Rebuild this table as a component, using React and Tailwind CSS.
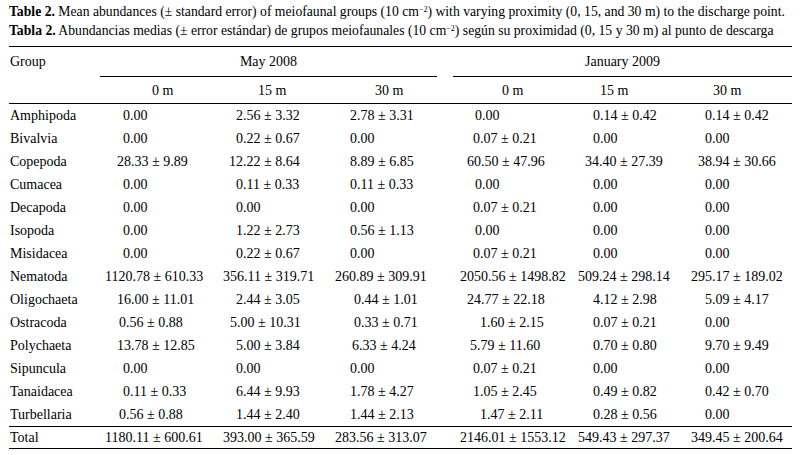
// Table 2 – meiofaunal abundances, typeset like the journal page
const COLS = ["w-[86px]", "w-[120px]", "w-[110px]", "w-[125px]", "w-[120px]", "w-[114px]", "w-[108px]"];

const rows = [
  ["Amphipoda", [["0.00", "pl-[28px]"], ["2.56 ± 3.32", "pl-[21px]"], ["2.78 ± 3.31", "pl-[25px]"], ["0.00", "pl-[25px]"], ["0.14 ± 0.42", "pl-[23px]"], ["0.14 ± 0.42", "pl-[21px]"]]],
  ["Bivalvia", [["0.00", "pl-[28px]"], ["0.22 ± 0.67", "pl-[21px]"], ["0.00", "pl-[25px]"], ["0.07 ± 0.21", "pl-[23px]"], ["0.00", "pl-[23px]"], ["0.00", "pl-[21px]"]]],
  ["Copepoda", [["28.33 ± 9.89", "pl-[22px]"], ["12.22 ± 8.64", "pl-[14px]"], ["8.89 ± 6.85", "pl-[25px]"], ["60.50 ± 47.96", "pl-[17px]"], ["34.40 ± 27.39", "pl-[15px]"], ["38.94 ± 30.66", "pl-[14px]"]]],
  ["Cumacea", [["0.00", "pl-[28px]"], ["0.11 ± 0.33", "pl-[21px]"], ["0.11 ± 0.33", "pl-[25px]"], ["0.00", "pl-[25px]"], ["0.00", "pl-[23px]"], ["0.00", "pl-[21px]"]]],
  ["Decapoda", [["0.00", "pl-[28px]"], ["0.00", "pl-[21px]"], ["0.00", "pl-[25px]"], ["0.07 ± 0.21", "pl-[23px]"], ["0.00", "pl-[23px]"], ["0.00", "pl-[21px]"]]],
  ["Isopoda", [["0.00", "pl-[28px]"], ["1.22 ± 2.73", "pl-[21px]"], ["0.56 ± 1.13", "pl-[25px]"], ["0.00", "pl-[25px]"], ["0.00", "pl-[23px]"], ["0.00", "pl-[21px]"]]],
  ["Misidacea", [["0.00", "pl-[28px]"], ["0.22 ± 0.67", "pl-[21px]"], ["0.00", "pl-[25px]"], ["0.07 ± 0.21", "pl-[23px]"], ["0.00", "pl-[23px]"], ["0.00", "pl-[21px]"]]],
  ["Nematoda", [["1120.78 ± 610.33", "pl-[10px]"], ["356.11 ± 319.71", "pl-[8px]"], ["260.89 ± 309.91", "pl-[10px]"], ["2050.56 ± 1498.82", "pl-[10px]"], ["509.24 ± 298.14", "pl-[8px]"], ["295.17 ± 189.02", "pl-[7px]"]]],
  ["Oligochaeta", [["16.00 ± 11.01", "pl-[22px]"], ["2.44 ± 3.05", "pl-[21px]"], ["0.44 ± 1.01", "pl-[29px]"], ["24.77 ± 22.18", "pl-[17px]"], ["4.12 ± 2.98", "pl-[23px]"], ["5.09 ± 4.17", "pl-[21px]"]]],
  ["Ostracoda", [["0.56 ± 0.88", "pl-[24px]"], ["5.00 ± 10.31", "pl-[15px]"], ["0.33 ± 0.71", "pl-[29px]"], ["1.60 ± 2.15", "pl-[30px]"], ["0.07 ± 0.21", "pl-[23px]"], ["0.00", "pl-[21px]"]]],
  ["Polychaeta", [["13.78 ± 12.85", "pl-[22px]"], ["5.00 ± 3.84", "pl-[21px]"], ["6.33 ± 4.24", "pl-[27px]"], ["5.79 ± 11.60", "pl-[20px]"], ["0.70 ± 0.80", "pl-[23px]"], ["9.70 ± 9.49", "pl-[21px]"]]],
  ["Sipuncula", [["0.00", "pl-[28px]"], ["0.00", "pl-[21px]"], ["0.00", "pl-[25px]"], ["0.07 ± 0.21", "pl-[23px]"], ["0.00", "pl-[23px]"], ["0.00", "pl-[21px]"]]],
  ["Tanaidacea", [["0.11 ± 0.33", "pl-[28px]"], ["6.44 ± 9.93", "pl-[21px]"], ["1.78 ± 4.27", "pl-[25px]"], ["1.05 ± 2.45", "pl-[23px]"], ["0.49 ± 0.82", "pl-[23px]"], ["0.42 ± 0.70", "pl-[21px]"]]],
  ["Turbellaria", [["0.56 ± 0.88", "pl-[24px]"], ["1.44 ± 2.40", "pl-[21px]"], ["1.44 ± 2.13", "pl-[25px]"], ["1.47 ± 2.11", "pl-[30px]"], ["0.28 ± 0.56", "pl-[23px]"], ["0.00", "pl-[21px]"]]],
];

const total = ["Total", [["1180.11 ± 600.61", "pl-[10px]"], ["393.00 ± 365.59", "pl-[8px]"], ["283.56 ± 313.07", "pl-[10px]"], ["2146.01 ± 1553.12", "pl-[10px]"], ["549.43 ± 297.37", "pl-[8px]"], ["349.45 ± 200.64", "pl-[7px]"]]];

const subHeads = [["0 m", "pl-[57px]"], ["15 m", "pl-[43px]"], ["30 m", "pl-[50px]"], ["0 m", "pl-[52px]"], ["15 m", "pl-[30px]"], ["30 m", "pl-[29px]"]];

const Row = ({ label, cells, className = "" }) => (
  <div className={`flex items-center h-[23px] ${className}`}>
    <div className={`${COLS[0]} pl-[1px] whitespace-nowrap`}>{label}</div>
    {cells.map(([text, pad], i) => (
      <div key={i} className={`${COLS[i + 1]} ${pad} whitespace-nowrap`}>
        {text}
      </div>
    ))}
  </div>
);

export default function App() {
  return (
    <div className="w-[800px] h-[455px] bg-white text-black overflow-hidden font-['Liberation_Serif','Times_New_Roman',serif] text-[14px] leading-[19px]">
      {/* caption */}
      <div className="pl-[9px] pt-[2px] whitespace-nowrap text-[13.7px]">
        <p>
          <b>Table 2.</b> Mean abundances (± standard error) of meiofaunal groups (10 cm
          <sup className="text-[8px]">−2</sup>) with varying proximity (0, 15, and 30 m) to the discharge point.
        </p>
        <p>
          <b>Tabla 2.</b> Abundancias medias (± error estándar) de grupos meiofaunales (10 cm
          <sup className="text-[8px]">−2</sup>) según su proximidad (0, 15 y 30 m) al punto de descarga
        </p>
      </div>

      <div className="ml-[9px] w-[783px] mt-[6px] border-t border-black">
        {/* header */}
        <div className="flex items-center h-[29px]">
          <div className="w-[91px] pl-[1px]">Group</div>
          <div className="w-[337px] text-center">May 2008</div>
          <div className="w-[16px]" />
          <div className="w-[339px] text-center">January 2009</div>
        </div>
        <div className="flex">
          <div className="w-[91px]" />
          <div className="w-[337px] border-t border-black" />
          <div className="w-[16px]" />
          <div className="w-[339px] border-t border-black" />
        </div>
        <div className="flex items-center h-[27px] border-b border-black">
          <div className={COLS[0]} />
          {subHeads.map(([t, pad], i) => (
            <div key={i} className={`${COLS[i + 1]} ${pad}`}>{t}</div>
          ))}
        </div>

        {/* body */}
        {rows.map(([label, cells]) => (
          <Row key={label} label={label} cells={cells} />
        ))}
        <Row label={total[0]} cells={total[1]} className="border-t border-b border-black" />
      </div>
    </div>
  );
}
